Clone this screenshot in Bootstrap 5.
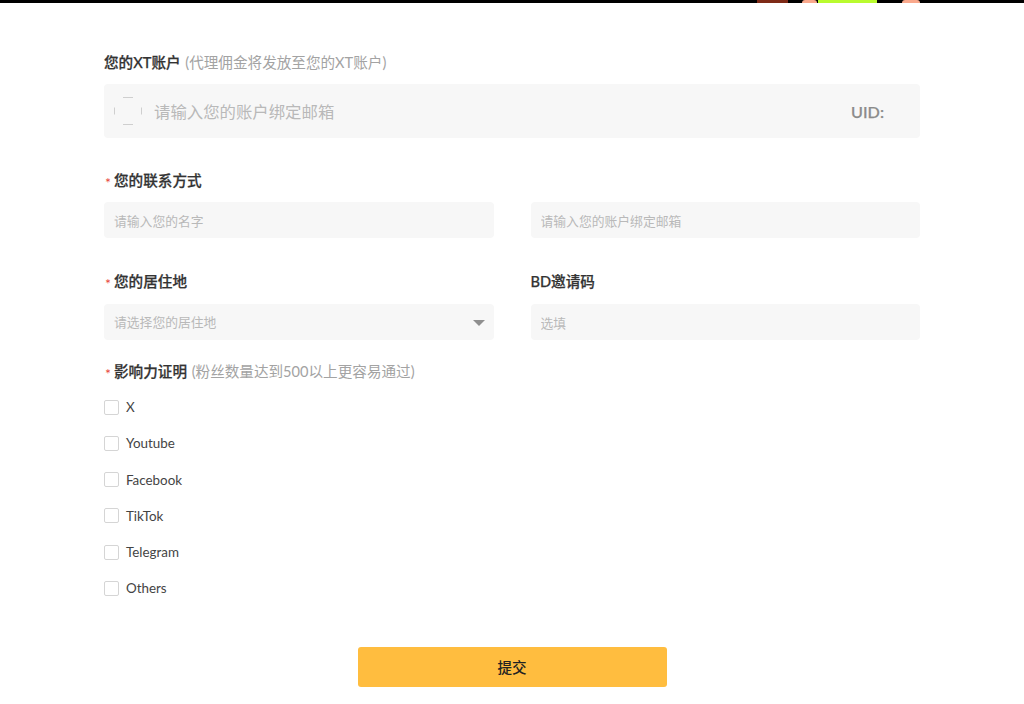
<!doctype html>
<html lang="zh">
<head>
<meta charset="utf-8">
<title>XT</title>
<link href="https://cdn.jsdelivr.net/npm/bootstrap@5.3.0/dist/css/bootstrap.min.css" rel="stylesheet">
<style>
html,body{height:704px;overflow:hidden}
body{font-family:Lato,"Noto Sans CJK SC",sans-serif;background:#fff;color:#333}
.topstrip{height:3px;background:#000;padding-left:757px}
.seg{height:100%}
.seg-a{width:31px;background:#7e2a17}
.seg-b{width:15px;margin-left:14px;background:#f9a88c;border-radius:6px 6px 0 0}
.seg-c{width:59px;margin-left:1px;background:#b9fb2e}
.seg-d{width:18px;margin-left:25px;background:#f9a88c;border-radius:6px 6px 0 0}
.formwrap{width:816px;margin:0 auto;padding-top:50px}
.lab{height:20px;font-size:14.6px;line-height:20px;font-weight:500;color:#333;margin:0;-webkit-text-stroke:.25px #333}
.hint{font-size:14.6px;font-weight:400;color:#a3a3a3;-webkit-text-stroke:0;margin-left:1px}
.req{display:inline-block;width:10px;color:#e8453c;font-size:14px;font-weight:400;-webkit-text-stroke:0;vertical-align:-2px;padding-left:1px;line-height:14px}
.bigbox{height:54px;background:#f7f7f7;border-radius:4px;margin-top:11px;padding:0 36px 0 10px}
.ring{width:28px;height:28px;flex:none;stroke:#cfcfcf;fill:none}
.bigbox input{font-size:16.4px;color:#333;background:transparent;border:0;outline:0;margin-left:12px;flex:1 1 auto;padding:2px 0 0}
.bigbox input::placeholder{color:#b9b9b9}
.uid{font-size:16.2px;font-weight:500;color:#8b8b8b;-webkit-text-stroke:.25px #8b8b8b;padding-top:2px}
.fieldrow{column-gap:36.5px;margin-top:10px;display:grid;grid-template-columns:390px 389.5px}
.fieldrow.first{margin-top:33px}
.fld{margin-top:12px;height:36px;background:#f7f7f7;border:0;border-radius:4px;font-size:12.8px;padding:2px 10px 0;color:#333;box-shadow:none}
.first .fld{margin-top:11px}
.fld::placeholder{color:#b9b9b9}
.fld:focus{background:#f7f7f7;box-shadow:none}
.selbox{color:#b9b9b9;padding:1px 9px 0 10px}
.caret-shape{width:0;height:0;border-left:6px solid transparent;border-right:6px solid transparent;border-top:6px solid #8f8f8f}
.sec2{margin-top:22px}
.choices{margin-top:17px;gap:20.3px}
.choice{height:16px;margin:0;padding:0;min-height:0;font-size:13.4px;color:#444;line-height:16px}
.choice .form-check-input{float:none;margin:0 7px 0 0;width:15px;height:15px;border:1px solid #d5d5d5;border-radius:2px;box-shadow:none}
.choice .form-check-label{line-height:16px}
.submit{display:block;width:309px;height:40px;margin:51px auto 0;padding:0;background:#ffbd3f;border:0;border-radius:3px;color:#222;font-size:14.6px;font-weight:500}
.submit:hover{background:#ffbd3f;color:#222}
</style>
</head>
<body>
<div class="topstrip d-flex"><div class="seg seg-a"></div><div class="seg seg-b"></div><div class="seg seg-c"></div><div class="seg seg-d"></div></div>
<form class="formwrap">
  <p class="lab">您的XT账户 <span class="hint">(代理佣金将发放至您的XT账户)</span></p>
  <div class="bigbox d-flex align-items-center">
    <svg class="ring" viewBox="0 0 28 28" aria-hidden="true"><path d="M9 .5H19M9 27.5H19M.5 10.5V17.5M27.5 10.5V17.5"/></svg>
    <input type="text" placeholder="请输入您的账户绑定邮箱" aria-label="邮箱">
    <span class="uid">UID:</span>
  </div>
  <div class="fieldrow first">
    <p class="lab"><span class="req">*</span>您的联系方式</p><span></span>
    <input class="form-control fld" type="text" placeholder="请输入您的名字" aria-label="名字">
    <input class="form-control fld" type="text" placeholder="请输入您的账户绑定邮箱" aria-label="邮箱">
  </div>
  <div class="fieldrow">
    <p class="lab mt-4"><span class="req">*</span>您的居住地</p>
    <p class="lab mt-4">BD邀请码</p>
    <div class="fld selbox d-flex align-items-center justify-content-between"><span>请选择您的居住地</span><span class="caret-shape"></span></div>
    <input class="form-control fld" type="text" placeholder="选填" aria-label="BD邀请码">
  </div>
  <p class="lab sec2"><span class="req">*</span>影响力证明 <span class="hint">(粉丝数量达到500以上更容易通过)</span></p>
  <div class="choices d-flex flex-column">
    <div class="form-check choice d-flex align-items-center"><input class="form-check-input" type="checkbox" id="c1"><label class="form-check-label" for="c1">X</label></div>
    <div class="form-check choice d-flex align-items-center"><input class="form-check-input" type="checkbox" id="c2"><label class="form-check-label" for="c2">Youtube</label></div>
    <div class="form-check choice d-flex align-items-center"><input class="form-check-input" type="checkbox" id="c3"><label class="form-check-label" for="c3">Facebook</label></div>
    <div class="form-check choice d-flex align-items-center"><input class="form-check-input" type="checkbox" id="c4"><label class="form-check-label" for="c4">TikTok</label></div>
    <div class="form-check choice d-flex align-items-center"><input class="form-check-input" type="checkbox" id="c5"><label class="form-check-label" for="c5">Telegram</label></div>
    <div class="form-check choice d-flex align-items-center"><input class="form-check-input" type="checkbox" id="c6"><label class="form-check-label" for="c6">Others</label></div>
  </div>
  <button type="button" class="btn submit">提交</button>
</form>
<script src="https://cdn.jsdelivr.net/npm/bootstrap@5.3.0/dist/js/bootstrap.bundle.min.js"></script>
</body>
</html>
